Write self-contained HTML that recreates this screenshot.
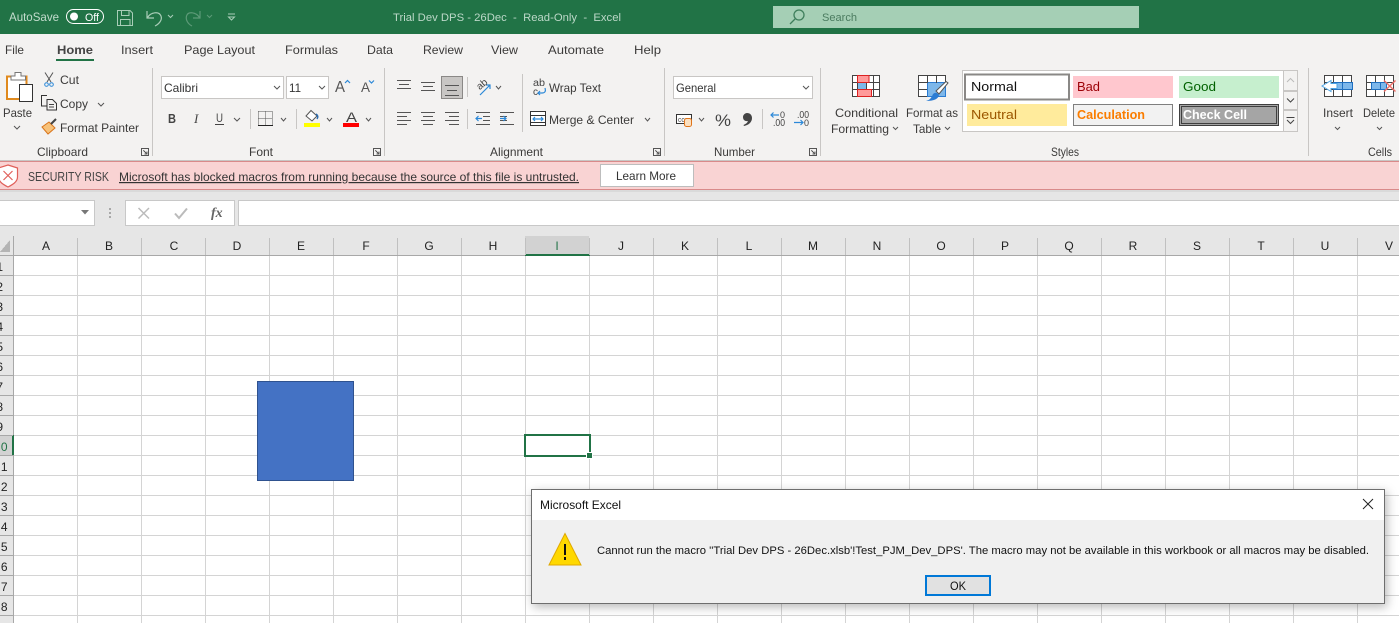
<!DOCTYPE html>
<html><head><meta charset="utf-8"><title>Excel</title>
<style>
html,body{margin:0;padding:0;width:1399px;height:623px;overflow:hidden;background:#fff}
svg{display:block;position:absolute;left:0;top:0}
text{font-family:"Liberation Sans",sans-serif;font-size:12px;fill:#444;white-space:pre}
.r{font-size:12px;fill:#3b3a39}
.h{font-size:12px;fill:#222;text-anchor:middle}
.n{font-size:12px;fill:#222;text-anchor:end}
.b{fill:none;stroke:#2b88d8;stroke-width:1.2}
.l{stroke:#555;stroke-width:1;fill:none}
.c{fill:none;stroke:#555;stroke-width:1}
</style></head><body>
<svg width="1399" height="623" viewBox="0 0 1399 623" xmlns="http://www.w3.org/2000/svg" shape-rendering="crispEdges">
<defs>
<pattern id="gr" x="14" y="256" width="64" height="20" patternUnits="userSpaceOnUse"><path d="M63.500 0V20M0 19.500H64" stroke="#d4d4d4" fill="none"/></pattern>
<filter id="sh" x="-5%" y="-15%" width="110%" height="130%"><feDropShadow dx="2" dy="3" stdDeviation="5" flood-color="#000" flood-opacity=".28"/></filter>
</defs>

<!-- title bar -->
<rect width="1399" height="34" fill="#217346"/>
<text x="9" y="21" textLength="50" lengthAdjust="spacingAndGlyphs" style="fill:#c3dccd">AutoSave</text>
<rect x="66.500" y="9.500" width="37" height="14" rx="7" fill="none" stroke="#fff" shape-rendering="auto"/>
<circle cx="74" cy="16.500" r="4" fill="#fff" shape-rendering="auto"/>
<text x="85" y="21" textLength="14" lengthAdjust="spacingAndGlyphs" style="font-size:11px;fill:#fff">Off</text>
<g fill="none" stroke="#a9cdb8" shape-rendering="auto">
<path d="M117.500 10.500H130L132.500 13V25.500H117.500Z"/><path d="M121.500 10.500V15.500H129V10.500M120.500 25.500V19.500H130V25.500"/>
<path d="M147 11V18H154M147.500 17.500C151 12 159 11 161 16C162.500 20 159 24 155 26" stroke-width="1.200"/>
<path d="M168 15l2.500 2.500 2.500-2.500"/>
<path d="M200 11V18H193M199.500 17.500C196 12 188 11 186.500 16C185.500 20 188 24 192 26" stroke="#5d9a78" stroke-width="1.200"/>
<path d="M207 15l2.500 2.500 2.500-2.500" stroke="#5d9a78"/>
<path d="M228 14H235M228.500 17H234.500L231.500 20Z"/>
</g>
<text x="393" y="21" textLength="228" lengthAdjust="spacingAndGlyphs" style="fill:#bcd8c8;font-size:11px">Trial Dev DPS - 26Dec  -  Read-Only  -  Excel</text>
<rect x="773" y="6" width="366" height="22" fill="#a5cfb5"/>
<g fill="none" stroke="#3f7f5c" shape-rendering="auto" stroke-width="1.300"><circle cx="799" cy="15" r="5"/><path d="M795 19L790 24"/></g>
<text x="822" y="21" textLength="35" lengthAdjust="spacingAndGlyphs" style="fill:#4b7c60;font-size:11px">Search</text>

<!-- tabs + ribbon -->
<rect y="34" width="1399" height="126" fill="#f3f2f1"/>
<rect y="160" width="1399" height="1" fill="#c8c6c4"/>
<g>
<text class="r" x="5" y="54" textLength="19" lengthAdjust="spacingAndGlyphs">File</text>
<text class="r" x="57" y="54" textLength="36" lengthAdjust="spacingAndGlyphs" style="font-weight:bold;fill:#444">Home</text>
<text class="r" x="121" y="54" textLength="32" lengthAdjust="spacingAndGlyphs">Insert</text>
<text class="r" x="184" y="54" textLength="71" lengthAdjust="spacingAndGlyphs">Page Layout</text>
<text class="r" x="285" y="54" textLength="53" lengthAdjust="spacingAndGlyphs">Formulas</text>
<text class="r" x="367" y="54" textLength="26" lengthAdjust="spacingAndGlyphs">Data</text>
<text class="r" x="423" y="54" textLength="40" lengthAdjust="spacingAndGlyphs">Review</text>
<text class="r" x="491" y="54" textLength="27" lengthAdjust="spacingAndGlyphs">View</text>
<text class="r" x="548" y="54" textLength="56" lengthAdjust="spacingAndGlyphs">Automate</text>
<text class="r" x="634" y="54" textLength="27" lengthAdjust="spacingAndGlyphs">Help</text>
</g>
<rect x="56" y="59" width="38" height="2" fill="#217346"/>

<!-- separators -->
<g fill="#c8c6c4"><rect x="152" y="68" width="1" height="88"/><rect x="384" y="68" width="1" height="88"/><rect x="664" y="68" width="1" height="88"/><rect x="820" y="68" width="1" height="88"/><rect x="1308" y="68" width="1" height="88"/>
<rect x="250" y="109" width="1" height="20"/><rect x="296" y="109" width="1" height="20"/><rect x="467" y="77" width="1" height="20"/><rect x="467" y="109" width="1" height="20"/><rect x="522" y="74" width="1" height="58"/><rect x="762" y="109" width="1" height="20"/></g>

<!-- clipboard -->
<g shape-rendering="auto">
<rect x="7" y="76.500" width="19.500" height="22.500" fill="#fff" stroke="#e08a1e" stroke-width="2"/>
<path d="M11 80V76H15V72.500H21V76H25.500V80Z" fill="#fff" stroke="#777"/>
<rect x="19.500" y="84.500" width="13" height="17" fill="#fff" stroke="#333"/>
<path d="M45 72.500L51 82M53 72.500L47 82" stroke="#555" fill="none"/><circle cx="46.500" cy="84.500" r="1.800" fill="none" stroke="#2b88d8"/><circle cx="51.500" cy="84.500" r="1.800" fill="none" stroke="#2b88d8"/>
<path d="M47 106H41.500V95.500H47M47 99.500H52.500L56.500 103.500V110H47Z" fill="#f3f2f1" stroke="#333"/>
<path d="M49 104.500H54M49 107H54" stroke="#444"/>
<path d="M42 127L49 122L55 128L48 134Z" fill="#f7c27a" stroke="#d9741a"/><path d="M51 124L56 119" stroke="#444" stroke-width="2"/>
</g>
<text class="r" x="3" y="117" textLength="29" lengthAdjust="spacingAndGlyphs">Paste</text>
<path class="c" d="M14 126l3 3 3-3" shape-rendering="auto"/>
<text class="r" x="60" y="84" textLength="19" lengthAdjust="spacingAndGlyphs">Cut</text>
<text class="r" x="60" y="108" textLength="28" lengthAdjust="spacingAndGlyphs">Copy</text>
<path class="c" d="M98 103l3 3 3-3" shape-rendering="auto"/>
<text class="r" x="60" y="132" textLength="79" lengthAdjust="spacingAndGlyphs">Format Painter</text>
<text class="r" x="37" y="156" textLength="51" lengthAdjust="spacingAndGlyphs">Clipboard</text>
<path class="c" d="M141.500 148.500H148.500V155.500H141.500ZM143.500 150.500L147 154M147 151.500V154H144.500"/>

<!-- font -->
<rect x="161.500" y="76.500" width="122" height="22" fill="#fff" stroke="#c8c6c4"/>
<text x="164" y="92" textLength="34" lengthAdjust="spacingAndGlyphs" style="fill:#333">Calibri</text>
<path class="c" d="M274 86l3 3 3-3" shape-rendering="auto"/>
<rect x="286.500" y="76.500" width="42" height="22" fill="#fff" stroke="#c8c6c4"/>
<text x="289" y="92" textLength="12" lengthAdjust="spacingAndGlyphs" style="fill:#333">11</text>
<path class="c" d="M319 86l3 3 3-3" shape-rendering="auto"/>
<text x="335" y="92" textLength="10" lengthAdjust="spacingAndGlyphs" style="font-size:16px;fill:#555">A</text>
<path d="M345 83l2.500-2.500 2.500 2.500" class="b" shape-rendering="auto"/>
<text x="361" y="92" textLength="9" lengthAdjust="spacingAndGlyphs" style="font-size:14px;fill:#555">A</text>
<path d="M369 80.500l2.500 2.500 2.500-2.500" class="b" shape-rendering="auto"/>
<text x="168" y="123" textLength="8" lengthAdjust="spacingAndGlyphs" style="font-weight:bold;fill:#444;font-size:13px">B</text>
<text x="194" y="123" style="font-style:italic;fill:#444;font-size:13px;font-family:'Liberation Serif',serif">I</text>
<text x="216" y="122" textLength="7" lengthAdjust="spacingAndGlyphs" style="fill:#444;font-size:12px">U</text><rect x="215" y="124" width="9" height="1" fill="#444"/>
<path class="c" d="M234 118l3 3 3-3" shape-rendering="auto"/>
<path d="M258.500 111.500H272.500V125.500M258.500 111.500V125M265.500 111.500V125.500M258.500 118.500H272.500" fill="none" stroke="#555" stroke-dasharray="1 1"/><rect x="258" y="125" width="15" height="1" fill="#222"/>
<path class="c" d="M281 118l2.500 3 2.500-3" shape-rendering="auto"/>
<path d="M306 116L311 110.500L317 116L312 121Z" fill="#fff" stroke="#555" shape-rendering="auto"/><path d="M316 114q3 2 1 5" stroke="#2b6cb0" fill="none" stroke-width="1.500" shape-rendering="auto"/>
<rect x="304" y="123" width="16" height="4" fill="#ffff00"/>
<path class="c" d="M327 118l2.500 3 2.500-3" shape-rendering="auto"/>
<text x="346" y="122" textLength="11" lengthAdjust="spacingAndGlyphs" style="font-size:14px;fill:#444">A</text>
<rect x="343" y="123" width="16" height="4" fill="#ff0000"/>
<path class="c" d="M366 118l2.500 3 2.500-3" shape-rendering="auto"/>
<text class="r" x="249" y="156" textLength="24" lengthAdjust="spacingAndGlyphs">Font</text>
<path class="c" d="M373.500 148.500H380.500V155.500H373.500ZM375.500 150.500L379 154M379 151.500V154H376.500"/>

<!-- alignment -->
<rect x="441.500" y="76.500" width="21" height="22" fill="#c8c6c4" stroke="#8a8886"/>
<g class="l">
<path d="M397 80.500H411M399 84.500H409M397 88.500H411"/>
<path d="M421 82.500H435M423 86.500H433M421 90.500H435"/>
<path d="M445 85.500H459M447 90.500H457M445 95.500H459"/>
<path d="M397 112.500H411M397 116.500H407M397 120.500H411M397 124.500H407"/>
<path d="M421 112.500H435M423 116.500H433M421 120.500H435M423 124.500H433"/>
<path d="M445 112.500H459M449 116.500H459M445 120.500H459M449 124.500H459"/>
<path d="M476 112.500H490M483 116.500H490M483 120.500H490M476 124.500H490"/>
<path d="M500 112.500H514M500 116.500H507M500 120.500H507M500 124.500H514"/>
</g>
<g class="b" shape-rendering="auto">
<path d="M482 118.500H476M478.500 116L476 118.500 478.500 121"/>
<path d="M500 118.500H506M503.500 116L506 118.500 503.500 121"/>
<path d="M480 95L490 85M486 85H490V89"/>
<path d="M545 88Q546.500 93 542 93H538M540 91L538 93 540 95"/>
<path d="M533 119H543M535 117L533 119 535 121M541 117L543 119 541 121"/>
</g>
<text x="476" y="88" transform="rotate(-40 481 84)" style="font-size:10px;fill:#444">ab</text>
<path class="c" d="M496 86l2.500 3 2.500-3" shape-rendering="auto"/>
<text x="533" y="86" textLength="12" lengthAdjust="spacingAndGlyphs" style="font-size:10px;fill:#444">ab</text>
<text x="533" y="95" style="font-size:10px;fill:#444">c</text>
<text class="r" x="549" y="92" textLength="52" lengthAdjust="spacingAndGlyphs">Wrap Text</text>
<rect x="530.500" y="111.500" width="15" height="14" fill="#fff" stroke="#333"/>
<path d="M530 115.500H546M530 122.500H546" stroke="#333"/>
<rect x="531" y="116" width="14" height="6" fill="#fff"/>
<path class="b" d="M533 119H543M535 117L533 119 535 121M541 117L543 119 541 121" shape-rendering="auto"/>
<text class="r" x="549" y="124" textLength="85" lengthAdjust="spacingAndGlyphs">Merge &amp; Center</text>
<path class="c" d="M645 118l2.500 3 2.500-3" shape-rendering="auto"/>
<text class="r" x="490" y="156" textLength="53" lengthAdjust="spacingAndGlyphs">Alignment</text>
<path class="c" d="M653.500 148.500H660.500V155.500H653.500ZM655.500 150.500L659 154M659 151.500V154H656.500"/>

<!-- number -->
<rect x="673.500" y="76.500" width="139" height="22" fill="#fff" stroke="#c8c6c4"/>
<text x="676" y="92" textLength="40" lengthAdjust="spacingAndGlyphs" style="fill:#333">General</text>
<path class="c" d="M803 86l3 3 3-3" shape-rendering="auto"/>
<rect x="676.500" y="114.500" width="15" height="9" fill="#fff" stroke="#333"/>
<text x="678" y="122" textLength="10" lengthAdjust="spacingAndGlyphs" style="font-size:7px;fill:#444">ccc</text>
<rect x="684.500" y="118.500" width="7" height="8" rx="2" fill="#fbe0c0" stroke="#e0741a" shape-rendering="auto"/>
<path class="c" d="M699 118l2.500 3 2.500-3" shape-rendering="auto"/>
<text x="715" y="126" textLength="16" lengthAdjust="spacingAndGlyphs" style="font-size:17px;fill:#444">%</text>
<path d="M747 113C750 113 752 115 752 118C752 122 749 125 744 126L743.500 125C746 124 747.500 122.500 748 121C745 121.500 743 120 743 117C743 115 745 113 747 113Z" fill="#444" shape-rendering="auto"/>
<text x="780" y="118" style="font-size:9px;fill:#444">0</text>
<text x="773" y="126" textLength="12" lengthAdjust="spacingAndGlyphs" style="font-size:10px;fill:#444">.00</text>
<path class="b" d="M779 115H771M773.500 112.500L771 115 773.500 117.500" shape-rendering="auto"/>
<text x="797" y="118" textLength="12" lengthAdjust="spacingAndGlyphs" style="font-size:10px;fill:#444">.00</text>
<text x="804" y="126" style="font-size:9px;fill:#444">0</text>
<path class="b" d="M794 122.500H803M800.500 120L803 122.500 800.500 125" shape-rendering="auto"/>
<text class="r" x="714" y="156" textLength="41" lengthAdjust="spacingAndGlyphs">Number</text>
<path class="c" d="M809.500 148.500H816.500V155.500H809.500ZM811.500 150.500L815 154M815 151.500V154H812.500"/>

<!-- conditional formatting -->
<rect x="852.500" y="75.500" width="27" height="21" fill="#fff" stroke="#444"/>
<path d="M852 82.500H880M852 89.500H880M857.500 75V97M866.500 75V97M873.500 75V97" stroke="#444" fill="none"/>
<rect x="857.500" y="75.500" width="11.500" height="7" fill="#ff9a9a" stroke="#d22"/>
<rect x="858" y="83" width="8" height="6" fill="#7db7ea"/>
<rect x="857.500" y="89.500" width="14" height="7" fill="#ff9a9a" stroke="#d22"/>
<text class="r" x="835" y="117" textLength="63" lengthAdjust="spacingAndGlyphs">Conditional</text>
<text class="r" x="831" y="133" textLength="58" lengthAdjust="spacingAndGlyphs">Formatting</text>
<path class="c" d="M893 127l2.500 2.500 2.500-2.500" shape-rendering="auto"/>
<rect x="918.500" y="75.500" width="27" height="21" fill="#fff" stroke="#444"/>
<rect x="927.500" y="82.500" width="18" height="14" fill="#7db7ea" stroke="#2b7cd3"/>
<path d="M918 82.500H927M918 89.500H927M927.500 75V83M936.500 75V83" stroke="#444"/>
<g shape-rendering="auto"><path d="M936 91L946 81.500L948 83L939 94Z" fill="#fff" stroke="#555"/><path d="M926 101Q931 100 933 94Q936 91 939 95Q938 101 926 101Z" fill="#2b7cd3"/></g>
<text class="r" x="906" y="117" textLength="52" lengthAdjust="spacingAndGlyphs">Format as</text>
<text class="r" x="913" y="133" textLength="28" lengthAdjust="spacingAndGlyphs">Table</text>
<path class="c" d="M945 127l2.500 2.500 2.500-2.500" shape-rendering="auto"/>

<!-- styles gallery -->
<rect x="962.500" y="70.500" width="335" height="61" fill="#fff" stroke="#c8c6c4"/>
<rect x="965" y="74.500" width="104" height="25" fill="#fff" stroke="#8a8886" stroke-width="2"/>
<text x="971" y="91" textLength="46" lengthAdjust="spacingAndGlyphs" style="font-size:13px;fill:#111">Normal</text>
<rect x="1073" y="76" width="100" height="22" fill="#ffc7ce"/>
<text x="1077" y="91" textLength="23" lengthAdjust="spacingAndGlyphs" style="font-size:13px;fill:#9c0006">Bad</text>
<rect x="1179" y="76" width="100" height="22" fill="#c6efce"/>
<text x="1183" y="91" textLength="33" lengthAdjust="spacingAndGlyphs" style="font-size:13px;fill:#006100">Good</text>
<rect x="967" y="104" width="100" height="22" fill="#ffeb9c"/>
<text x="971" y="119" textLength="46" lengthAdjust="spacingAndGlyphs" style="font-size:13px;fill:#9c5700">Neutral</text>
<rect x="1073.500" y="104.500" width="99" height="21" fill="#f2f2f2" stroke="#7f7f7f"/>
<text x="1077" y="119" textLength="68" lengthAdjust="spacingAndGlyphs" style="font-size:13px;font-weight:bold;fill:#fa7d00">Calculation</text>
<rect x="1179.500" y="104.500" width="99" height="21" fill="#a5a5a5" stroke="#3f3f3f"/>
<rect x="1181.500" y="106.500" width="95" height="17" fill="none" stroke="#3f3f3f"/>
<text x="1183" y="119" textLength="64" lengthAdjust="spacingAndGlyphs" style="font-size:13px;font-weight:bold;fill:#fff">Check Cell</text>
<rect x="1283.500" y="70.500" width="14" height="20" fill="#f3f2f1" stroke="#c8c6c4"/>
<rect x="1283.500" y="91.500" width="14" height="18" fill="#f3f2f1" stroke="#c8c6c4"/>
<rect x="1283.500" y="110.500" width="14" height="21" fill="#f3f2f1" stroke="#c8c6c4"/>
<path d="M1287 82l3.500-3.500 3.500 3.500" fill="none" stroke="#bbb" shape-rendering="auto"/>
<path d="M1287 98.500l3.500 3.500 3.500-3.500" fill="none" stroke="#444" shape-rendering="auto"/>
<path d="M1286.500 117.500H1294.500M1287 120l3.500 3.500 3.500-3.500" fill="none" stroke="#444" shape-rendering="auto"/>
<text class="r" x="1051" y="156" textLength="28" lengthAdjust="spacingAndGlyphs">Styles</text>

<!-- cells -->
<rect x="1324.500" y="75.500" width="27" height="21" fill="#fff" stroke="#444"/>
<path d="M1324 82.500H1352M1324 89.500H1352M1333.500 75V97M1342.500 75V97" stroke="#444"/>
<rect x="1333.500" y="82.500" width="19" height="7" fill="#7db7ea" stroke="#1f6fc0"/>
<rect x="1342" y="83" width="1" height="6" fill="#1f6fc0"/>
<path d="M1322 86L1331 80.500V83.500H1337V88.500H1331V91.500Z" fill="#fff" stroke="#4ba3e3" shape-rendering="auto"/>
<rect x="1366.500" y="75.500" width="27" height="21" fill="#fff" stroke="#444"/>
<path d="M1366 82.500H1394M1366 89.500H1394M1375.500 75V97M1384.500 75V97" stroke="#444"/>
<rect x="1371.500" y="82.500" width="15" height="7" fill="#7db7ea" stroke="#1f6fc0"/>
<rect x="1380" y="83" width="1" height="6" fill="#1f6fc0"/>
<path d="M1384 80.500L1395.500 91.500M1395.500 80.500L1384 91.500" stroke="#f0706a" stroke-width="1.500" shape-rendering="auto"/>
<text class="r" x="1323" y="117" textLength="30" lengthAdjust="spacingAndGlyphs">Insert</text>
<path class="c" d="M1335 127l2.500 2.500 2.500-2.500" shape-rendering="auto"/>
<text class="r" x="1363" y="117" textLength="32" lengthAdjust="spacingAndGlyphs">Delete</text>
<path class="c" d="M1377 127l2.500 2.500 2.500-2.500" shape-rendering="auto"/>
<text class="r" x="1368" y="156" textLength="24" lengthAdjust="spacingAndGlyphs">Cells</text>

<!-- security bar -->
<rect y="161" width="1399" height="29" fill="#f9d3d3"/>
<rect y="161" width="1399" height="1" fill="#d98a8a"/><rect y="189" width="1399" height="1" fill="#d98a8a"/>
<g shape-rendering="auto"><path d="M8 165L17.500 168V177C17.500 182 12 185 8 187C4 185 -1.500 182 -1.500 177V168Z" fill="#fff" stroke="#e0605a" stroke-width="1.200"/><path d="M3.500 171L12.500 180M12.500 171L3.500 180" stroke="#e0605a" stroke-width="1.200" fill="none"/></g>
<text x="28" y="181" textLength="81" lengthAdjust="spacingAndGlyphs" style="fill:#444;font-size:12.500px">SECURITY RISK</text>
<text x="119" y="181" textLength="460" lengthAdjust="spacingAndGlyphs" style="fill:#333;text-decoration:underline">Microsoft has blocked macros from running because the source of this file is untrusted.</text>
<rect x="600.500" y="164.500" width="93" height="22" fill="#fff" stroke="#bdbdbd"/>
<text x="616" y="180" textLength="60" lengthAdjust="spacingAndGlyphs" style="fill:#333">Learn More</text>

<!-- formula bar -->
<rect y="190" width="1399" height="46" fill="#e6e6e6"/>
<rect y="190" width="1399" height="2" fill="#dadada"/>
<rect x="-1" y="200.500" width="95.500" height="25" fill="#fff" stroke="#c8c8c8"/>
<path d="M81 210H89L85 214.500Z" fill="#777" shape-rendering="auto"/>
<g fill="#a8a8a8"><rect x="109" y="208" width="2" height="2"/><rect x="109" y="212" width="2" height="2"/><rect x="109" y="216" width="2" height="2"/></g>
<rect x="125.500" y="200.500" width="109" height="25" fill="#fff" stroke="#c8c8c8"/>
<path d="M138.500 208L149 218.500M149 208L138.500 218.500" stroke="#bbb" stroke-width="1.500" fill="none" shape-rendering="auto"/>
<path d="M175 213.500L179 218 187 208.500" stroke="#bbb" stroke-width="2" fill="none" shape-rendering="auto"/>
<text x="211" y="217" style="font-family:'Liberation Serif',serif;font-style:italic;font-weight:bold;font-size:14px;fill:#666">fx</text>
<rect x="238.500" y="200.500" width="1161" height="25" fill="#fff" stroke="#c8c8c8"/>

<!-- grid -->
<rect x="14" y="256" width="1385" height="367" fill="#fff"/>
<rect x="14" y="256" width="1385" height="367" fill="url(#gr)"/>
<rect y="236" width="1399" height="19" fill="#e6e6e6"/>
<rect y="255" width="13" height="368" fill="#e6e6e6"/>
<rect y="255" width="1399" height="1" fill="#a8a8a8"/>
<rect x="13" y="236" width="1" height="387" fill="#a8a8a8"/>
<path d="M10 240V252H0Z" fill="#b4b4b4"/>
<rect x="525" y="236" width="64" height="19" fill="#d2d2d2"/>
<rect x="525" y="254" width="65" height="2" fill="#217346"/>
<rect y="435" width="13" height="20" fill="#d2d2d2"/>
<rect x="12" y="435" width="2" height="20" fill="#217346"/>
<g fill="#c0c0c0">
<rect x="77" y="238" width="1" height="17"/><rect x="141" y="238" width="1" height="17"/><rect x="205" y="238" width="1" height="17"/><rect x="269" y="238" width="1" height="17"/><rect x="333" y="238" width="1" height="17"/><rect x="397" y="238" width="1" height="17"/><rect x="461" y="238" width="1" height="17"/><rect x="525" y="238" width="1" height="17"/><rect x="589" y="238" width="1" height="17"/><rect x="653" y="238" width="1" height="17"/><rect x="717" y="238" width="1" height="17"/><rect x="781" y="238" width="1" height="17"/><rect x="845" y="238" width="1" height="17"/><rect x="909" y="238" width="1" height="17"/><rect x="973" y="238" width="1" height="17"/><rect x="1037" y="238" width="1" height="17"/><rect x="1101" y="238" width="1" height="17"/><rect x="1165" y="238" width="1" height="17"/><rect x="1229" y="238" width="1" height="17"/><rect x="1293" y="238" width="1" height="17"/><rect x="1357" y="238" width="1" height="17"/>
</g>
<g fill="#a8a8a8"><rect y="275" width="13" height="1"/><rect y="295" width="13" height="1"/><rect y="315" width="13" height="1"/><rect y="335" width="13" height="1"/><rect y="355" width="13" height="1"/><rect y="375" width="13" height="1"/><rect y="395" width="13" height="1"/><rect y="415" width="13" height="1"/><rect y="435" width="13" height="1"/><rect y="455" width="13" height="1"/><rect y="475" width="13" height="1"/><rect y="495" width="13" height="1"/><rect y="515" width="13" height="1"/><rect y="535" width="13" height="1"/><rect y="555" width="13" height="1"/><rect y="575" width="13" height="1"/><rect y="595" width="13" height="1"/><rect y="615" width="13" height="1"/></g>
<g>
<text class="h" x="46" y="250">A</text><text class="h" x="109" y="250">B</text><text class="h" x="174" y="250">C</text><text class="h" x="237" y="250">D</text><text class="h" x="301" y="250">E</text><text class="h" x="366" y="250">F</text><text class="h" x="429" y="250">G</text><text class="h" x="493" y="250">H</text><text class="h" x="557" y="250" style="fill:#217346">I</text><text class="h" x="621" y="250">J</text><text class="h" x="685" y="250">K</text><text class="h" x="749" y="250">L</text><text class="h" x="813" y="250">M</text><text class="h" x="877" y="250">N</text><text class="h" x="941" y="250">O</text><text class="h" x="1005" y="250">P</text><text class="h" x="1069" y="250">Q</text><text class="h" x="1133" y="250">R</text><text class="h" x="1197" y="250">S</text><text class="h" x="1261" y="250">T</text><text class="h" x="1325" y="250">U</text><text class="h" x="1389" y="250">V</text>
</g>
<g>
<text class="n" x="3" y="271">1</text><text class="n" x="3" y="291">2</text><text class="n" x="3" y="311">3</text><text class="n" x="3" y="331">4</text><text class="n" x="3" y="351">5</text><text class="n" x="3" y="371">6</text><text class="n" x="3" y="391">7</text><text class="n" x="3" y="411">8</text><text class="n" x="3" y="431">9</text><text class="n" x="7.500" y="451" style="fill:#217346">0</text><text class="n" x="7.500" y="471">1</text><text class="n" x="7.500" y="491">2</text><text class="n" x="7.500" y="511">3</text><text class="n" x="7.500" y="531">4</text><text class="n" x="7.500" y="551">5</text><text class="n" x="7.500" y="571">6</text><text class="n" x="7.500" y="591">7</text><text class="n" x="7.500" y="611">8</text>
</g>

<!-- shape -->
<rect x="257.500" y="381.500" width="96" height="99" fill="#4472c4" stroke="#2f528f"/>

<!-- selection -->
<rect x="525" y="435" width="65" height="21" fill="#fff" stroke="#217346" stroke-width="2"/>
<rect x="586" y="452" width="7" height="7" fill="#fff"/>
<rect x="587" y="453" width="5" height="5" fill="#217346"/>

<!-- dialog -->
<rect x="531.500" y="489.500" width="853" height="114" fill="#f0f0f0" stroke="#6e6e6e" filter="url(#sh)"/>
<rect x="532" y="490" width="852" height="30" fill="#fff"/>
<text x="540" y="509" textLength="81" lengthAdjust="spacingAndGlyphs" style="fill:#111">Microsoft Excel</text>
<path d="M1363 499L1373 509M1373 499L1363 509" stroke="#222" fill="none" shape-rendering="auto"/>
<path d="M565 533.500L581 565H549Z" fill="#ffd800" stroke="#e0a800" shape-rendering="auto"/>
<rect x="564" y="544" width="2" height="11" fill="#111"/><rect x="564" y="557" width="2" height="3" fill="#111"/>
<text x="597" y="554" textLength="772" lengthAdjust="spacingAndGlyphs" style="font-size:11px;fill:#111">Cannot run the macro ''Trial Dev DPS - 26Dec.xlsb'!Test_PJM_Dev_DPS'. The macro may not be available in this workbook or all macros may be disabled.</text>
<rect x="926" y="576" width="64" height="19" fill="#e1e1e1" stroke="#0078d7" stroke-width="2"/>
<text x="950" y="590" textLength="16" lengthAdjust="spacingAndGlyphs" style="fill:#111">OK</text>
</svg>
</body></html>
